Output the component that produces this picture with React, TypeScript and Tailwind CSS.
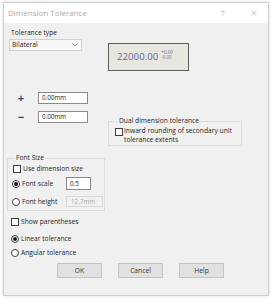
import React from 'react'

function CheckBox() {
  return <span className="inline-block w-[8px] h-[8px] shrink-0 bg-white border border-[#3c3c3c]" />
}

function Radio({ on }: { on?: boolean }) {
  return (
    <span className="inline-flex w-[8px] h-[8px] shrink-0 items-center justify-center rounded-full bg-white border border-[#3c3c3c]">
      {on && <span className="w-[4px] h-[4px] rounded-full bg-[#1a1a1a]" />}
    </span>
  )
}

function Button({ label }: { label: string }) {
  return (
    <div className="w-[45px] h-[15px] flex items-center justify-center bg-[#e1e1e1] border border-[#c4c4c4] text-[#333]">
      {label}
    </div>
  )
}

export default function App() {
  return (
    <div
      className="w-[271px] h-[300px] bg-white overflow-hidden pt-[2px] pl-[3px] text-[6.7px] leading-[10px] text-[#1e1e1e]"
      style={{ fontFamily: '"Open Sans", "Noto Sans", sans-serif' }}
    >
      <div className="w-[266px] h-[294px] flex flex-col bg-[#f0f0f0] border border-[#cfcfcf] shadow-[0_0_3px_rgba(0,0,0,0.15)]">
        {/* title bar */}
        <div className="h-[20px] shrink-0 flex items-center bg-white pl-[4px] text-[8px] text-[#a8a8a8]">
          <span>Dimension Tolerance</span>
          <span className="ml-auto w-[10px] text-center text-[8px]">?</span>
          <span className="ml-[21px] mr-[9px] w-[10px] text-center text-[11px] font-light">×</span>
        </div>

        <div className="flex-1 flex flex-col">
          {/* tolerance type + preview */}
          <div className="flex">
            <div className="w-[104px] pl-[5px]">
              <div className="mt-[5px] pl-[2px]">Tolerance type</div>
              <div className="mt-[1px] w-[73px] h-[12px] flex items-center bg-[#f7f7f7] border border-[#d0d0d0] pl-[2px] pr-[3px]">
                <span>Bilateral</span>
                <svg className="ml-auto" width="6" height="4" viewBox="0 0 6 4">
                  <path d="M0.5 0.5 L3 3 L5.5 0.5" fill="none" stroke="#777" strokeWidth="0.8" />
                </svg>
              </div>
            </div>
            <div className="mt-[20px] w-[81px] h-[28px] flex items-center pl-[8px] bg-[#e8e7df] border border-[#5c5c5c]">
              <span className="text-[9.5px] text-[#5f5fa3] tracking-[0.1px]">22000.00</span>
              <span className="ml-[3px] flex flex-col text-[4.5px] leading-[5px] text-[#5f5fa3] -mt-[5px]">
                <span>+0.00</span>
                <span>-0.00</span>
              </span>
            </div>
          </div>

          {/* plus / minus + dual tolerance */}
          <div className="flex items-start">
            <div className="w-[104px] mt-[21px] flex flex-col gap-[7px]">
              <div className="flex items-center">
                <span className="w-[34px] text-center text-[11px] font-bold text-[#34447a]">+</span>
                <div className="w-[50px] h-[12px] flex items-center pl-[3px] bg-white border border-[#8a8a8a] text-[6.3px]">0.00mm</div>
              </div>
              <div className="flex items-center">
                <span className="w-[34px] text-center text-[11px] font-bold text-[#34447a]">−</span>
                <div className="w-[50px] h-[12px] flex items-center pl-[3px] bg-white border border-[#8a8a8a] text-[6.3px]">0.00mm</div>
              </div>
            </div>
            <fieldset className="mt-[46px] w-[134px] h-[29px] border border-[#dcdcdc] pl-[6px]">
              <legend className="ml-[3px] px-[1px] leading-[8px]">Dual dimension tolerance</legend>
              <div className="flex items-start gap-[1px] mt-[1px]">
                <span className="mt-[2px]"><CheckBox /></span>
                <span className="leading-[9px]">Inward rounding of secondary unit<br />tolerance extents</span>
              </div>
            </fieldset>
          </div>

          {/* font size */}
          <fieldset className="mt-[8px] ml-[3px] w-[98px] h-[57px] border border-[#dcdcdc] pl-[4px]">
            <legend className="ml-[3px] px-[1px] leading-[8px]">Font Size</legend>
            <div className="mt-[2px] h-[10px] flex items-center gap-[2px] pl-[1px]">
              <CheckBox />
              <span>Use dimension size</span>
            </div>
            <div className="mt-[3px] h-[13px] flex items-center gap-[2px]">
              <Radio on />
              <span>Font scale</span>
              <div className="ml-auto mr-[13px] w-[25px] h-[13px] flex items-center pl-[3px] bg-white border border-[#8a8a8a] text-[6.3px]">0.5</div>
            </div>
            <div className="mt-[6px] h-[11px] flex items-center gap-[2px]">
              <Radio />
              <span>Font height</span>
              <div className="ml-auto mr-[1px] w-[37px] h-[11px] flex items-center pl-[4px] bg-[#f0f0f0] border border-[#d8d8d8] text-[6.3px] text-[#aaa]">12.7mm</div>
            </div>
          </fieldset>

          <div className="mt-[6px] ml-[7px] h-[10px] flex items-center gap-[2px]">
            <CheckBox />
            <span>Show parentheses</span>
          </div>
          <div className="mt-[7px] ml-[7px] h-[10px] flex items-center gap-[2px]">
            <Radio on />
            <span>Linear tolerance</span>
          </div>
          <div className="mt-[4px] ml-[7px] h-[10px] flex items-center gap-[2px]">
            <Radio />
            <span>Angular tolerance</span>
          </div>

          <div className="mt-[5px] ml-[53px] flex gap-[16px]">
            <Button label="OK" />
            <Button label="Cancel" />
            <Button label="Help" />
          </div>
        </div>
      </div>
    </div>
  )
}
